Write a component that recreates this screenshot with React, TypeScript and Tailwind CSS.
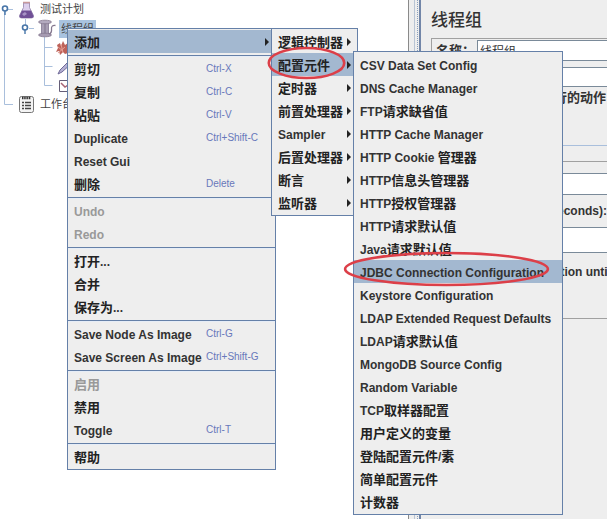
import type { ReactNode } from 'react';
import clsx from 'clsx';

interface MenuEntry {
  label: string;
  shortcut?: string;
  disabled?: boolean;
  active?: boolean;
  submenu?: boolean;
  circled?: boolean;
}

const editMenu: MenuEntry[][] = [
  [{ label: '添加', active: true, submenu: true }],
  [
    { label: '剪切', shortcut: 'Ctrl-X' },
    { label: '复制', shortcut: 'Ctrl-C' },
    { label: '粘贴', shortcut: 'Ctrl-V' },
    { label: 'Duplicate', shortcut: 'Ctrl+Shift-C' },
    { label: 'Reset Gui' },
    { label: '删除', shortcut: 'Delete' },
  ],
  [
    { label: 'Undo', disabled: true },
    { label: 'Redo', disabled: true },
  ],
  [{ label: '打开...' }, { label: '合并' }, { label: '保存为...' }],
  [
    { label: 'Save Node As Image', shortcut: 'Ctrl-G' },
    { label: 'Save Screen As Image', shortcut: 'Ctrl+Shift-G' },
  ],
  [{ label: '启用', disabled: true }, { label: '禁用' }, { label: 'Toggle', shortcut: 'Ctrl-T' }],
  [{ label: '帮助' }],
];

const addMenu: MenuEntry[][] = [
  [
    { label: '逻辑控制器', submenu: true },
    { label: '配置元件', submenu: true, active: true, circled: true },
    { label: '定时器', submenu: true },
    { label: '前置处理器', submenu: true },
    { label: 'Sampler', submenu: true },
    { label: '后置处理器', submenu: true },
    { label: '断言', submenu: true },
    { label: '监听器', submenu: true },
  ],
];

const configMenu: MenuEntry[][] = [
  [
    { label: 'CSV Data Set Config' },
    { label: 'DNS Cache Manager' },
    { label: 'FTP请求缺省值' },
    { label: 'HTTP Cache Manager' },
    { label: 'HTTP Cookie 管理器' },
    { label: 'HTTP信息头管理器' },
    { label: 'HTTP授权管理器' },
    { label: 'HTTP请求默认值' },
    { label: 'Java请求默认值' },
    { label: 'JDBC Connection Configuration', active: true, circled: true },
    { label: 'Keystore Configuration' },
    { label: 'LDAP Extended Request Defaults' },
    { label: 'LDAP请求默认值' },
    { label: 'MongoDB Source Config' },
    { label: 'Random Variable' },
    { label: 'TCP取样器配置' },
    { label: '用户定义的变量' },
    { label: '登陆配置元件/素' },
    { label: '简单配置元件' },
    { label: '计数器' },
  ],
];

// Chinese runs are set one pixel larger than Latin ones
function Label({ text }: { text: string }) {
  const runs = text.split(/([\u4e00-\u9fff]+)/).filter(Boolean);
  return (
    <span className="whitespace-pre">
      {runs.map((run, index) => (
        <span key={index} className={/[\u4e00-\u9fff]/.test(run) ? 'text-[13px] text-[#222]' : 'text-[12px]'}>
          {run}
        </span>
      ))}
    </span>
  );
}

function Circle({ className }: { className: string }) {
  return (
    <svg
      className={clsx('pointer-events-none absolute overflow-visible', className)}
      viewBox="0 0 100 100"
      preserveAspectRatio="none"
      aria-hidden="true"
    >
      <ellipse cx="50" cy="50" rx="49" ry="47" fill="none" stroke="#dc3f48" strokeWidth="2.6" vectorEffect="non-scaling-stroke" />
    </svg>
  );
}

interface MenuProps {
  name: string;
  groups: MenuEntry[][];
  className: string;
  circleClassName?: string;
}

function Menu({ name, groups, className, circleClassName = '' }: MenuProps) {
  return (
    <div role="menu" aria-label={name} className={clsx('absolute border border-[#6580a8] bg-[#eee] py-px', className)}>
      {groups.map((group, groupIndex) => (
        <div key={groupIndex}>
          {groupIndex > 0 && <div role="separator" className="mt-0.5 h-0.5 border-t border-[#6580a8] bg-[#e6edf7]" />}
          {group.map((entry) => (
            <button
              key={entry.label}
              type="button"
              role="menuitem"
              disabled={entry.disabled}
              className={clsx(
                'relative flex h-[23px] w-full items-center pl-1.5 text-left font-bold',
                entry.active && 'bg-[#a3b8d0]',
                entry.disabled ? 'text-[#999] [&_span]:text-[#999]' : 'text-[#333]'
              )}
            >
              <span className="flex-1">
                <Label text={entry.label} />
              </span>
              {entry.shortcut && (
                <span className="w-[69px] whitespace-nowrap text-[10px] font-normal text-[#6878bb]">{entry.shortcut}</span>
              )}
              {entry.submenu && (
                <svg className="mr-1.5 h-2 w-1" viewBox="0 0 4 8" aria-hidden="true">
                  <path d="M0 0l4 4-4 4z" fill="#222" />
                </svg>
              )}
              {entry.circled && <Circle className={circleClassName} />}
            </button>
          ))}
        </div>
      ))}
    </div>
  );
}

function Handle({ x }: { x: number }) {
  return (
    <g>
      <circle cx={x} cy="8.5" r="2.5" fill="#fff" stroke="#4775a8" strokeWidth="1.6" />
      <path d={`M${x} 11v4`} stroke="#4775a8" strokeWidth="1.4" />
    </g>
  );
}

function TreeRow({ width, art, children }: { width: string; art: ReactNode; children?: ReactNode }) {
  return (
    <li className="flex h-[19px] items-center">
      <svg className={clsx('h-[19px] shrink-0 overflow-visible', width)} aria-hidden="true">
        {art}
      </svg>
      {children}
    </li>
  );
}

const guide = { stroke: '#a9bfdc', strokeWidth: 1, fill: 'none' };

function Tree() {
  return (
    <ul className="text-[11px] text-[#444]">
      <TreeRow
        width="w-10"
        art={
          <>
            <path d="M4.500 12v7M8 9.500h5" {...guide} />
            <Handle x={5} />
            <path d="M23.500 3h6v4.500l4 8q.5 2.500-2 2.500h-10q-2.500 0-2-2.500l4-8z" fill="#ddd0ed" stroke="#9283aa" strokeWidth=".8" />
            <path d="M22 10.500h9l2.500 5.500q0 2-2 2h-10q-2 0-2-2z" fill="#705096" />
            <path d="M22 14l3-2 2 2-3 2z" fill="#a893c5" />
            <path d="M23 2.500h7" stroke="#c89a9c" strokeWidth="1.500" />
          </>
        }
      >
        <span>测试计划</span>
      </TreeRow>
      <TreeRow
        width="w-[59px]"
        art={
          <>
            <path d="M4.500 0v19M25.500 0v6M29 9.500h5M44.500 18v1" {...guide} />
            <Handle x={25} />
            <path d="M41 3h8v13h-8z" fill="#9389a0" />
            <path d="M43 4v11M47 4v11" stroke="#bdb5c8" />
            <ellipse cx="45" cy="3" rx="6.500" ry="1.800" fill="#b3aabf" stroke="#85788f" strokeWidth=".8" />
            <ellipse cx="45" cy="16" rx="6.500" ry="1.800" fill="#a69bb2" stroke="#85788f" strokeWidth=".8" />
            <path d="M49 15q3-1 2.500-5t4-3.500" fill="none" stroke="#85788f" strokeWidth="1.300" />
          </>
        }
      >
        <span className="bg-[#a9c3df] px-0.5 leading-[18px]">线程组</span>
      </TreeRow>
      <TreeRow
        width="w-[75px]"
        art={
          <>
            <path d="M4.500 0v19M44.500 0v19M44.500 9.500h8" {...guide} />
            <path d="M57 7l3-2 1 3 2-5 2 4 3-2v10l-3 1-2-2-3 3-1-4-3 1 2-4z" fill="#bd6259" />
            <path d="M58 9l5 4M61 6l2 9M58 15l7-6" stroke="#e7a095" />
          </>
        }
      />
      <TreeRow
        width="w-[75px]"
        art={
          <>
            <path d="M4.500 0v19M44.500 0v19M44.500 9.500h8" {...guide} />
            <path d="M58 17l2-4 9-9 3 2-10 9z" fill="#b5b1d4" stroke="#6f6997" />
          </>
        }
      />
      <TreeRow
        width="w-[75px]"
        art={
          <>
            <path d="M4.500 0v19M44.500 0v9.500h8" {...guide} />
            <path d="M59.500 4.500h12v11h-12z" fill="#fff" stroke="#665e78" />
            <path d="M61 7l4 4 6-4" fill="none" stroke="#a76575" strokeWidth="1.500" />
          </>
        }
      />
      <TreeRow
        width="w-10"
        art={
          <>
            <path d="M4.500 0v9.500h8.500" {...guide} />
            <rect x="19.500" y="1.500" width="14" height="16" rx="2" fill="#f4f4f4" stroke="#777" />
            <path d="M22 3h9" stroke="#333" strokeWidth="2.500" strokeDasharray="1.500 .7" />
            <path d="M22 7.500h2M22 10.500h2M22 13.500h2M25 7.500h6M25 10.500h6M25 13.500h6" stroke="#444" strokeWidth="1.400" />
          </>
        }
      >
        <span>工作台</span>
      </TreeRow>
    </ul>
  );
}

// Fields run up to the window edge, so they have no right border
const field =
  'block min-w-0 border border-r-0 border-[#7a8a99] bg-white px-0.5 text-[12px] font-normal text-[#333] outline-none';

function ThreadGroupForm() {
  return (
    <form className="flex min-w-0 flex-1 flex-col overflow-hidden bg-[#eee] pl-2.5 text-[13px] font-bold text-[#333]">
      <h1 className="mt-2 h-[30px] text-[17px] leading-[26px] font-medium">线程组</h1>
      <div className="flex flex-col gap-1.5 border-t border-l border-[#a0a0a0] pt-px pl-1">
        <div className="flex items-center">
          <label htmlFor="name" className="w-[41px] shrink-0 whitespace-nowrap">名称：</label>
          <input id="name" className={clsx(field, 'h-[21px] flex-1')} defaultValue="线程组" />
        </div>
        <input aria-label="注释" className={clsx(field, 'h-5 w-full')} />
      </div>
      <fieldset className="h-[59px] border-b border-[#a9bfdc] pt-px pl-1.5">
        <legend className="float-left leading-5 whitespace-nowrap">在取样器错误后要执行的动作</legend>
      </fieldset>
      <fieldset className="mt-[15px] border-y border-[#a0a0a0] pt-[11px] pl-1">
        <input aria-label="线程数" className={clsx(field, 'h-[22px] w-full')} />
        <div className="flex h-8 items-center">
          <label htmlFor="ramp" className="text-[12px] whitespace-nowrap">Ramp-Up Period (in seconds):</label>
        </div>
        <input id="ramp" className={clsx(field, 'h-[26px] w-full')} />
        <label className="flex h-[65px] items-start gap-2.5 pt-2.5 text-[12px] leading-[18px] whitespace-nowrap">
          <input type="checkbox" className="mt-1 size-3 shrink-0" />
          Delay Thread creation until needed
        </label>
      </fieldset>
    </form>
  );
}

export default function App() {
  return (
    <main className="relative flex min-h-screen overflow-hidden bg-white font-['Liberation_Sans','Noto_Sans_CJK_SC',sans-serif]">
      <nav aria-label="测试计划" className="w-[408px] shrink-0">
        <Tree />
      </nav>
      <div className="flex w-[13px] shrink-0 border-r-2 border-l border-r-[#7286a8] border-l-[#8a8a8a] bg-[#eee]">
        <div className="ml-0.5 w-1 border-r border-[#b8c4d4]" />
        <div className="ml-0.5 w-px border-l border-dotted border-[#8aa0bd]" />
      </div>
      <ThreadGroupForm />

      <Menu name="编辑" groups={editMenu} className="top-7 left-[67px] w-[209px]" />
      <Menu
        name="添加"
        groups={addMenu}
        className="top-7 left-[271px] w-[87px]"
        circleClassName="-top-1.5 -left-1 h-8 w-[77px]"
      />
      <Menu
        name="配置元件"
        groups={configMenu}
        className="top-[51px] left-[353px] w-[210px]"
        circleClassName="-top-2 -left-[11px] h-[34px] w-[207px]"
      />
    </main>
  );
}
